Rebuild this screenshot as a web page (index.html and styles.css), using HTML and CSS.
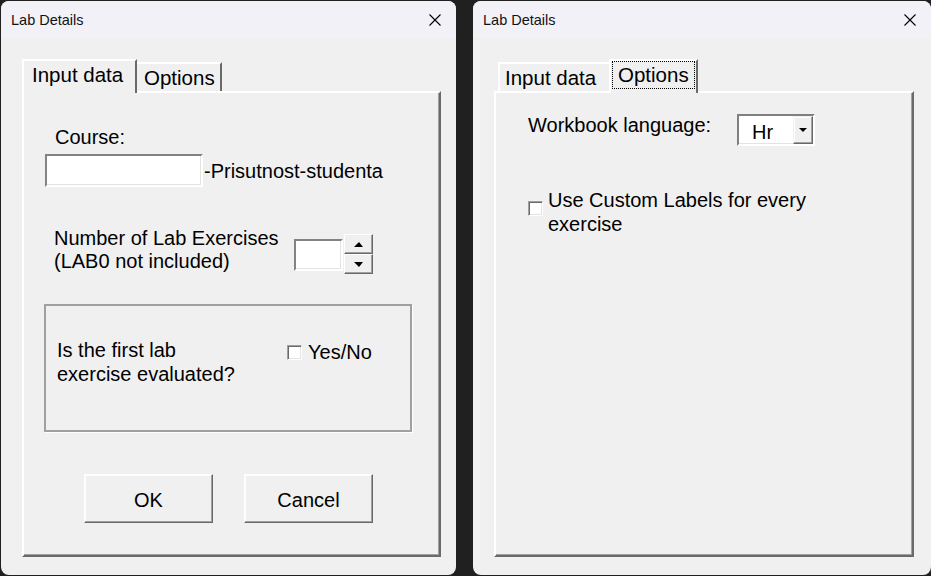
FILE: index.html
```html
<!DOCTYPE html>
<html>
<head>
<meta charset="utf-8">
<title>Lab Details</title>
<link rel="stylesheet" href="styles.css">
</head>
<body>
<div class="desk">
  <section class="dialog dlg-left">
    <header class="titlebar">
      <span class="title">Lab Details</span>
      <svg class="close" width="12" height="12" viewBox="0 0 12 12"><path d="M0.5 0.5L11.5 11.5M11.5 0.5L0.5 11.5" stroke="#000" stroke-width="1.1" fill="none"/></svg>
    </header>
    <div class="tabs">
      <div class="tab tab-sel l-input">Input data</div>
      <div class="tab tab-unsel l-opt">Options</div>
    </div>
    <div class="panel panel-left">
      <div class="lbl course-lbl">Course:</div>
      <div class="course-row">
        <div class="textbox course-box"></div>
        <span class="lbl course-suffix">-Prisutnost-studenta</span>
      </div>
      <div class="num-row">
        <div class="lbl num-lbl">Number of Lab Exercises<br>(LAB0 not included)</div>
        <div class="spin">
          <div class="textbox spin-box"></div>
          <div class="spin-btns">
            <div class="spin-btn"><span class="tri-up"></span></div>
            <div class="spin-btn"><span class="tri-down"></span></div>
          </div>
        </div>
      </div>
      <div class="frame">
        <div class="lbl frame-lbl">Is the first lab<br>exercise evaluated?</div>
        <div class="check">
          <span class="checkbox"></span>
          <span class="lbl">Yes/No</span>
        </div>
      </div>
      <div class="buttons">
        <button class="btn">OK</button>
        <button class="btn">Cancel</button>
      </div>
    </div>
  </section>

  <section class="dialog dlg-right">
    <header class="titlebar">
      <span class="title">Lab Details</span>
      <svg class="close" width="12" height="12" viewBox="0 0 12 12"><path d="M0.5 0.5L11.5 11.5M11.5 0.5L0.5 11.5" stroke="#000" stroke-width="1.1" fill="none"/></svg>
    </header>
    <div class="tabs">
      <div class="tab tab-unsel r-input">Input data</div>
      <div class="tab tab-sel r-opt"><span class="focus">Options</span></div>
    </div>
    <div class="panel panel-right">
      <div class="lang-row">
        <div class="lbl lang-lbl">Workbook language:</div>
        <div class="combo">
          <div class="combo-text">Hr</div>
          <div class="combo-btn"><span class="tri-down"></span></div>
        </div>
      </div>
      <div class="custom-row">
        <span class="checkbox custom-box"></span>
        <div class="lbl custom-lbl">Use Custom Labels for every<br>exercise</div>
      </div>
    </div>
  </section>
</div>
</body>
</html>
```
FILE: styles.css
```css
html, body {
  margin: 0;
  padding: 0;
}

body {
  width: 931px;
  height: 576px;
  overflow: hidden;
  background: #202020;
  font-family: "Liberation Sans", Arial, sans-serif;
  font-size: 20px;
  color: #000;
}

.desk {
  display: flex;
  gap: 17px;
  padding: 1px 0 0 1px;
}

.dialog {
  height: 574px;
  background: #f0f0f0;
  border-radius: 8px;
  overflow: hidden;
  display: flex;
  flex-direction: column;
  flex: none;
}

.dlg-left { width: 455px; }
.dlg-right { width: 458px; }

.titlebar {
  flex: none;
  height: 37px;
  background: #f3f1f8;
  display: flex;
  align-items: center;
  justify-content: space-between;
  padding: 0 15px 0 10px;
}

.title {
  font-size: 14.5px;
  line-height: 16px;
  color: #111;
}

.close { display: block; }

/* tabs */
.tabs {
  flex: none;
  display: flex;
  align-items: flex-end;
  height: 32px;
  margin: 21px 0 0 21px;
}

.tab {
  box-sizing: border-box;
  line-height: 23px;
  padding-top: 2px;
  background: #f0f0f0;
  white-space: nowrap;
  font-size: 20.5px;
}

.tab-sel {
  height: 34px;
  margin-bottom: -2px;
  border-top: 2px solid #fff;
  border-left: 2px solid #fff;
  border-right: 2px solid #6a6a6a;
  position: relative;
  z-index: 1;
}

.tab-unsel {
  height: 29px;
  border-top: 2px solid #fff;
}

.l-input { width: 115px; padding-left: 8px; }
.l-opt {
  width: 85px;
  padding-left: 7px;
  border-right: 2px solid #6a6a6a;
}

.r-input {
  width: 111px;
  margin-left: 4px;
  padding-left: 5px;
  border-left: 2px solid #fff;
}
.r-opt { width: 89px; padding-left: 1px; padding-top: 0; }

.focus {
  display: inline-block;
  border: 1px dotted #000;
  padding: 1px 5px 2px 5px;
  line-height: 23px;
}

/* panel */
.panel {
  flex: none;
  box-sizing: border-box;
  height: 466px;
  margin-left: 21px;
  border-top: 2px solid #fff;
  border-left: 2px solid #fff;
  border-right: 2px solid #6a6a6a;
  border-bottom: 2px solid #6a6a6a;
  box-shadow: inset -1px -1px 0 #a0a0a0;
  display: flex;
  flex-direction: column;
  align-items: flex-start;
}

.panel-left { width: 419px; }
.panel-right { width: 420px; }

.lbl {
  line-height: 23px;
  white-space: nowrap;
}

.textbox {
  box-sizing: border-box;
  background: #fff;
  border: 2px solid;
  border-color: #838383 #fff #fff #838383;
  box-shadow: inset -1px -1px 0 #e3e3e3;
}

.course-lbl { margin: 33px 0 0 31px; }

.course-row {
  display: flex;
  align-items: center;
  margin: 5px 0 0 21px;
}

.course-box { width: 158px; height: 33px; }
.course-suffix { margin-left: 1px; padding-top: 1px; }

.num-row {
  display: flex;
  align-items: flex-start;
  margin: 40px 0 0 30px;
}

.num-lbl { width: 240px; padding-top: 0; }

.spin {
  display: flex;
  align-items: center;
  margin-top: 7px;
}

.spin-box { width: 49px; height: 32px; margin-top: 1px; }

.spin-btns {
  display: flex;
  flex-direction: column;
  margin-left: 1px;
}

.spin-btn {
  box-sizing: border-box;
  width: 29px;
  height: 20px;
  background: #f0f0f0;
  border: 1px solid;
  border-color: #fff #696969 #696969 #fff;
  box-shadow: inset -1px -1px 0 #a0a0a0;
  display: flex;
  align-items: center;
  justify-content: center;
}

.tri-up {
  width: 0;
  height: 0;
  border-left: 5px solid transparent;
  border-right: 4px solid transparent;
  border-bottom: 5px solid #000;
}

.tri-down {
  width: 0;
  height: 0;
  border-left: 4px solid transparent;
  border-right: 4px solid transparent;
  border-top: 4px solid #000;
}

.spin-btn .tri-down {
  border-left-width: 5px;
  border-top-width: 5px;
}

.frame {
  box-sizing: border-box;
  width: 368px;
  height: 128px;
  margin: 30px 0 0 20px;
  border: 2px solid #a0a0a0;
  box-shadow: 1px 1px 0 #fff;
  display: flex;
  align-items: flex-start;
  padding: 32px 0 0 11px;
}

.frame-lbl { width: 230px; line-height: 24px; }

.check {
  display: flex;
  align-items: center;
  gap: 6px;
  margin-top: 3px;
}

.checkbox {
  display: block;
  flex: none;
  box-sizing: border-box;
  width: 15px;
  height: 15px;
  background: #fff;
  border: 1px solid;
  border-color: #a0a0a0 #fff #fff #a0a0a0;
  box-shadow: inset 1px 1px 0 #696969, inset -1px -1px 0 #e3e3e3;
}

.buttons {
  display: flex;
  gap: 31px;
  margin: 42px 0 0 60px;
}

.btn {
  box-sizing: border-box;
  width: 129px;
  height: 49px;
  padding: 3px 0 0 0;
  font-family: inherit;
  font-size: 20px;
  color: #000;
  background: #f0f0f0;
  border: 1px solid;
  border-color: #fff #696969 #696969 #fff;
  box-shadow: inset -1px -1px 0 #a0a0a0, inset 1px 1px 0 #fdfdfd;
}

/* right panel */
.lang-row {
  display: flex;
  align-items: flex-start;
  margin: 20px 0 0 32px;
}

.lang-lbl { width: 209px; padding-top: 1px; }

.combo {
  box-sizing: border-box;
  width: 78px;
  height: 32px;
  margin-top: 1px;
  background: #fff;
  border: 2px solid;
  border-color: #808080 #fff #fff #808080;
  box-shadow: inset -1px -1px 0 #e3e3e3;
  display: flex;
}

.combo-text {
  flex: 1;
  padding: 5px 0 0 13px;
  line-height: 23px;
}

.combo-btn {
  box-sizing: border-box;
  width: 20px;
  height: 28px;
  background: #f0f0f0;
  border: 1px solid;
  border-color: #f0f0f0 #696969 #696969 #f0f0f0;
  box-shadow: inset -1px -1px 0 #a0a0a0, inset 1px 1px 0 #fff;
  display: flex;
  align-items: center;
  justify-content: center;
}

.custom-row {
  display: flex;
  align-items: flex-start;
  margin: 42px 0 0 32px;
}

.custom-box { margin-top: 13px; }

.custom-lbl {
  margin-left: 5px;
  line-height: 24px;
}
```
